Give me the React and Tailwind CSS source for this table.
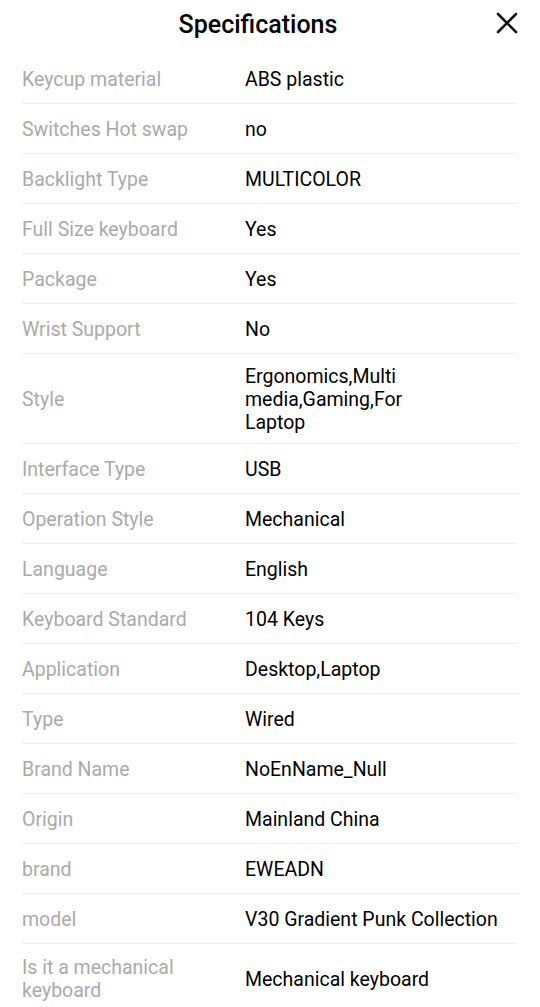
import React from "react";

const rows = [
  ["Keycup material", "ABS plastic"],
  ["Switches Hot swap", "no"],
  ["Backlight Type", "MULTICOLOR"],
  ["Full Size keyboard", "Yes"],
  ["Package", "Yes"],
  ["Wrist Support", "No"],
  ["Style", ["Ergonomics,Multi", "media,Gaming,For", "Laptop"]],
  ["Interface Type", "USB"],
  ["Operation Style", "Mechanical"],
  ["Language", "English"],
  ["Keyboard Standard", "104 Keys"],
  ["Application", "Desktop,Laptop"],
  ["Type", "Wired"],
  ["Brand Name", "NoEnName_Null"],
  ["Origin", "Mainland China"],
  ["brand", "EWEADN"],
  ["model", "V30 Gradient Punk Collection"],
  ["Is it a mechanical keyboard", "Mechanical keyboard"],
];

export default function App() {
  return (
    <div className="w-[540px] h-[1007px] overflow-hidden bg-white" style={{ fontFamily: "Roboto, 'Noto Sans', sans-serif" }}>
      <div className="relative h-[54px] flex items-center justify-center pr-[24px]">
        <h1 className="text-[25px] font-medium text-black leading-none -mt-[6px]">Specifications</h1>
        <button className="absolute right-[22px] top-[12px] w-[22px] h-[22px] flex items-center justify-center">
          <svg width="22" height="22" viewBox="0 0 22 22">
            <path d="M2 2 L20 20 M20 2 L2 20" stroke="#111" strokeWidth="2.6" strokeLinecap="round" />
          </svg>
        </button>
      </div>
      <div className="px-[22px]">
        {rows.map(([label, value], i) => {
          const last = i === rows.length - 1;
          const h = Array.isArray(value) ? "h-[90px]" : last ? "h-[68px]" : "h-[50px]";
          return (
            <div
              key={i}
              className={`flex items-center pt-[2px] border-[#eeeeee] ${last ? "" : "border-b"} ${h}`}
            >
              <div className="w-[200px] text-[19.5px] leading-[23px] text-[#aaaaaa]">{label}</div>
              <div className="ml-[23px] text-[19.5px] leading-[23px] text-black">
                {Array.isArray(value)
                  ? value.map((v, j) => <div key={j}>{v}</div>)
                  : value}
              </div>
            </div>
          );
        })}
      </div>
    </div>
  );
}
